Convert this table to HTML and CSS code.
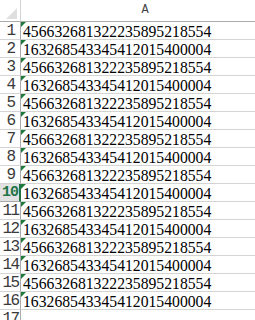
FILE: index.html
```html
<!DOCTYPE html>
<html>
<head>
<meta charset="utf-8">
<link rel="stylesheet" href="styles.css">
</head>
<body>
<div class="sheet">
  <div class="corner"><span class="corner-tri"></span></div>
  <div class="colhead">A</div>

  <div class="rowhead">1</div><div class="cell">456632681322235895218554</div>
  <div class="rowhead">2</div><div class="cell">163268543345412015400004</div>
  <div class="rowhead">3</div><div class="cell">456632681322235895218554</div>
  <div class="rowhead">4</div><div class="cell">163268543345412015400004</div>
  <div class="rowhead">5</div><div class="cell">456632681322235895218554</div>
  <div class="rowhead">6</div><div class="cell">163268543345412015400004</div>
  <div class="rowhead">7</div><div class="cell">456632681322235895218554</div>
  <div class="rowhead">8</div><div class="cell">163268543345412015400004</div>
  <div class="rowhead">9</div><div class="cell">456632681322235895218554</div>
  <div class="rowhead active">10</div><div class="cell">163268543345412015400004</div>
  <div class="rowhead">11</div><div class="cell">456632681322235895218554</div>
  <div class="rowhead">12</div><div class="cell">163268543345412015400004</div>
  <div class="rowhead">13</div><div class="cell">456632681322235895218554</div>
  <div class="rowhead">14</div><div class="cell">163268543345412015400004</div>
  <div class="rowhead">15</div><div class="cell">456632681322235895218554</div>
  <div class="rowhead">16</div><div class="cell">163268543345412015400004</div>
  <div class="rowhead">17</div><div class="cell empty"></div>
</div>
</body>
</html>
```

FILE: styles.css
```css
html, body {
  margin: 0;
  padding: 0;
  background: #ffffff;
}
body {
  width: 255px;
  height: 320px;
  overflow: hidden;
}
.sheet {
  display: grid;
  grid-template-columns: 21px 1fr;
  grid-template-rows: 22px repeat(17, 18px);
  width: 255px;
  overflow: hidden;
}
.corner {
  position: relative;
  border-right: 1px solid #d4d4d4;
  border-bottom: 1px solid #ababab;
  background: #ffffff;
}
.corner-tri {
  position: absolute;
  right: 3px;
  bottom: 2px;
  width: 0;
  height: 0;
  border-left: 11px solid transparent;
  border-bottom: 11px solid #dfdfdf;
}
.colhead {
  border-bottom: 1px solid #ababab;
  font-family: "Liberation Mono", monospace;
  font-size: 12px;
  color: #444444;
  text-align: center;
  line-height: 20px;
  padding-left: 14px;
}
.rowhead {
  border-right: 1px solid #ababab;
  border-bottom: 1px solid #d4d4d4;
  font-family: "Liberation Mono", monospace;
  font-size: 16px;
  letter-spacing: -1.5px;
  color: #3a3a3a;
  text-align: center;
  line-height: 18px;
  padding-left: 1px;
  box-sizing: border-box;
  white-space: nowrap;
}
.rowhead.active {
  background: #e1e1e1;
  color: #217346;
  font-weight: bold;
  font-size: 15px;
  letter-spacing: -1px;
  border-right: 2px solid #217346;
  border-bottom: 1px solid #ababab;
}
.cell {
  position: relative;
  border-bottom: 1px solid #d4d4d4;
  font-family: "Liberation Serif", "Times New Roman", serif;
  font-size: 15.7px;
  color: #000000;
  line-height: 19px;
  padding-left: 2px;
  white-space: nowrap;
  box-sizing: border-box;
}
.cell::before {
  content: "";
  position: absolute;
  left: 0;
  top: 0;
  width: 0;
  height: 0;
  border-top: 5px solid #1f7a3c;
  border-right: 5px solid transparent;
}
.cell.empty::before {
  display: none;
}
```
